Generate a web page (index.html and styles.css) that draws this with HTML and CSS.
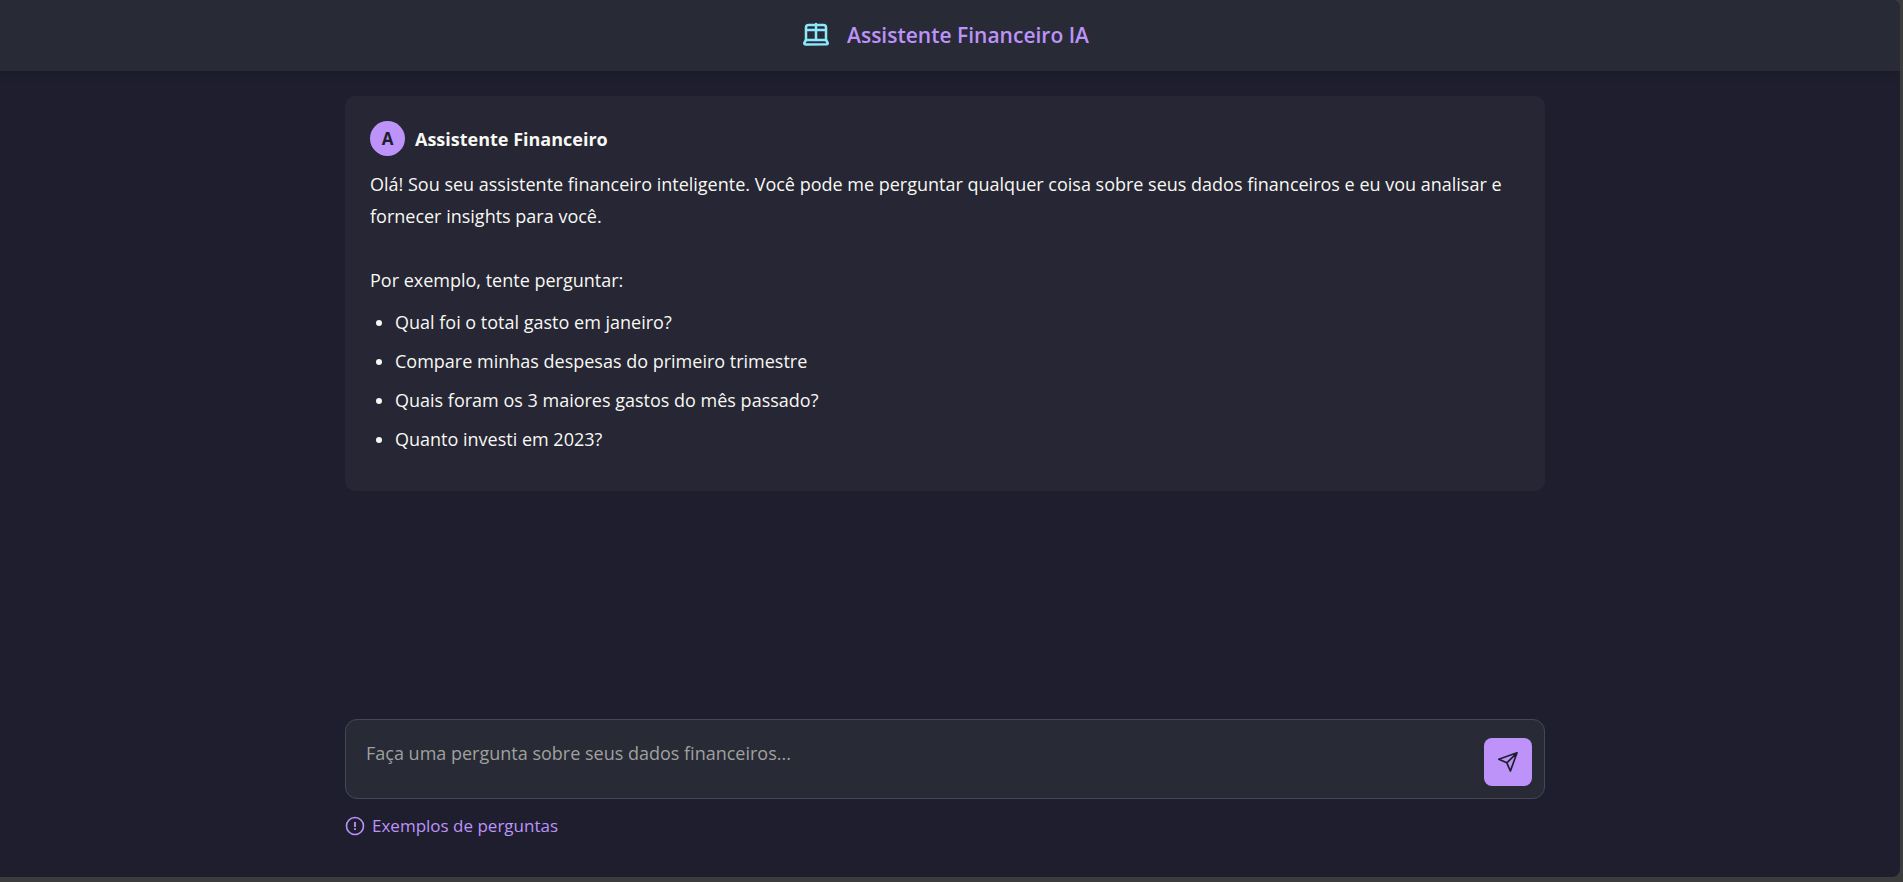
FILE: index.html
```html
<!DOCTYPE html>
<html lang="pt-BR">
<head>
<meta charset="utf-8">
<title>Assistente Financeiro IA</title>
<link rel="stylesheet" href="styles.css">
</head>
<body>
<div class="app">
  <header class="header">
    <svg class="header-icon" viewBox="0 0 24 24" fill="none" stroke="currentColor" stroke-width="2" stroke-linecap="round" stroke-linejoin="round" aria-hidden="true">
      <path d="M4 16V6a2 2 0 0 1 2-2h12a2 2 0 0 1 2 2v10"/>
      <path d="M4 8h16M12 3.200v12.800"/>
      <path d="M4 16h16l1.300 2.200a.9.9 0 0 1-.8 1.300h-17a.9.9 0 0 1-.8-1.300z"/>
    </svg>
    <h1 class="title">Assistente Financeiro IA</h1>
  </header>
  <main class="chat">
    <article class="message">
      <div class="message-head">
        <span class="avatar">A</span>
        <h2 class="sender">Assistente Financeiro</h2>
      </div>
      <p class="intro">Olá! Sou seu assistente financeiro inteligente. Você pode me perguntar qualquer coisa sobre seus dados financeiros e eu vou analisar e fornecer insights para você.</p>
      <p class="lead">Por exemplo, tente perguntar:</p>
      <ul class="examples">
        <li>Qual foi o total gasto em janeiro?</li>
        <li>Compare minhas despesas do primeiro trimestre</li>
        <li>Quais foram os 3 maiores gastos do mês passado?</li>
        <li>Quanto investi em 2023?</li>
      </ul>
    </article>
  </main>
  <footer class="composer">
    <form class="input-box">
      <textarea class="question" rows="1" aria-label="Pergunta" placeholder="Faça uma pergunta sobre seus dados financeiros..."></textarea>
      <button class="send" type="button" aria-label="Enviar">
        <svg class="send-icon" viewBox="0 0 24 24" fill="none" stroke="currentColor" stroke-width="1.700" stroke-linecap="round" stroke-linejoin="round" aria-hidden="true">
          <path d="M21 2.800 2.800 9.200l8 3.600 3.600 8.200zM21 2.800l-10.200 10"/>
        </svg>
      </button>
    </form>
    <button class="toggle" type="button">
      <svg class="toggle-icon" viewBox="0 0 20 20" fill="none" stroke="currentColor" stroke-width="1.600" aria-hidden="true">
        <circle cx="10" cy="10" r="8.500"/>
        <path d="M10 6v5M10 12.300v1.700" stroke-width="1.800"/>
      </svg>
      Exemplos de perguntas
    </button>
  </footer>
</div>
</body>
</html>
```
FILE: styles.css
```css
* {
  box-sizing: border-box;
}

body {
  margin: 0;
  background: #3c3c3c;
  color: #f8f8f2;
  font-family: "Segoe UI", "Open Sans", sans-serif;
  font-size: 18px;
  line-height: 32px;
}

.app {
  display: flex;
  flex-direction: column;
  height: calc(100vh - 5px);
  margin-right: 3px;
  background: #1e1e2e;
  border-radius: 0 8px 8px 0;
  overflow: hidden;
}

.header {
  display: flex;
  align-items: center;
  justify-content: center;
  gap: 16px;
  padding: 19px 10px 20px 0;
  background: #282a36;
  box-shadow: 0 2px 10px rgba(0, 0, 0, 0.2);
}

.header-icon {
  width: 30px;
  height: 30px;
  color: #8be9fd;
}

.title {
  margin: 0;
  color: #bd93f9;
  font-size: 21px;
  font-weight: 600;
  line-height: 32px;
}

.chat {
  flex: 1;
  min-height: 0;
  padding: 25px 10px 25px 0;
}

.message {
  max-width: 1200px;
  margin: 0 auto;
  padding: 25px;
  background: #262635;
  border-radius: 10px;
}

.message-head {
  display: flex;
  align-items: center;
  gap: 10px;
  margin-bottom: 12px;
}

.avatar {
  display: grid;
  place-items: center;
  width: 35px;
  height: 35px;
  border-radius: 50%;
  background: #bd93f9;
  color: #1e1e2e;
  font-size: 17px;
  font-weight: 700;
}

.sender {
  margin: 0;
  font-size: 18px;
  font-weight: 700;
}

.intro {
  margin: 0 0 32px;
}

.lead {
  margin: 0 0 10px;
}

.examples {
  display: grid;
  gap: 7px;
  margin: 0 0 11px;
  padding-left: 25px;
}

.composer {
  width: 100%;
  max-width: 1210px;
  margin: 0 auto;
  padding: 0 10px 35px 0;
}

.input-box {
  display: flex;
  align-items: center;
  height: 80px;
  padding: 0 12px 0 20px;
  background: #282a36;
  border: 1px solid #44475a;
  border-radius: 12px;
}

.question {
  flex: 1;
  height: 44px;
  padding: 0;
  border: 0;
  outline: 0;
  resize: none;
  background: transparent;
  color: #f8f8f2;
  font: inherit;
}

.question::placeholder {
  color: #a0a09e;
}

.send {
  display: grid;
  place-items: center;
  width: 48px;
  height: 48px;
  margin-top: 6px;
  padding: 0;
  border: 0;
  border-radius: 8px;
  background: #bd93f9;
  color: #1e1e2e;
}

.send-icon {
  width: 24px;
  height: 24px;
}

.toggle {
  display: flex;
  align-items: center;
  gap: 7px;
  margin-top: 11px;
  padding: 0;
  border: 0;
  background: none;
  color: #bd93f9;
  font: inherit;
  font-size: 17px;
}

.toggle-icon {
  width: 20px;
  height: 20px;
}
```
